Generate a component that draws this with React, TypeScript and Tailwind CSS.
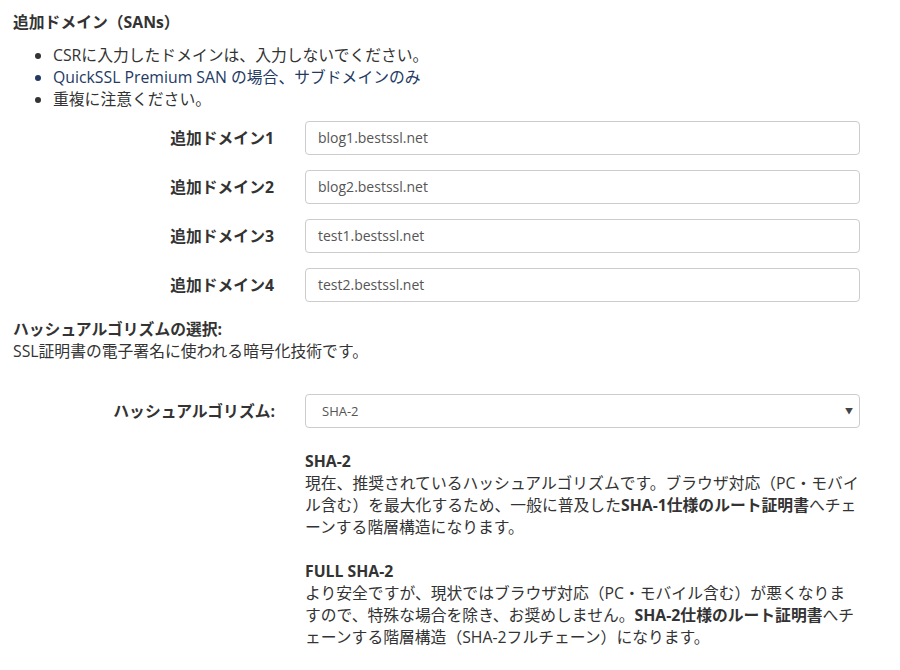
export default function App() {
  const doms = ["blog1.bestssl.net", "blog2.bestssl.net", "test1.bestssl.net", "test2.bestssl.net"];
  return (
    <div className="w-[900px] h-[670px] overflow-hidden bg-white text-[#333] text-[15.8px] leading-[22px]" style={{ fontFamily: '"Open Sans", "Noto Sans CJK JP", sans-serif' }}>
      <div className="pl-[13px] pt-[11px]">
        <div className="font-bold">追加ドメイン（SANs）</div>
        <ul className="list-disc pl-[40px] mt-[11px]">
          <li>CSRに入力したドメインは、入力しないでください。</li>
          <li className="text-[#243a63]">QuickSSL Premium SAN の場合、サブドメインのみ</li>
          <li>重複に注意ください。</li>
        </ul>
        <div className="mt-[11px] flex flex-col gap-[15px]">
          {doms.map((d, i) => (
            <div key={i} className="flex items-center">
              <div className="w-[261px] text-right font-bold">追加ドメイン{i + 1}</div>
              <div className="ml-[31px] w-[555px] h-[34px] border border-[#ccc] rounded-[4px] px-[12px] flex items-center text-[14px] text-[#555]">{d}</div>
            </div>
          ))}
        </div>
        <div className="mt-[16px] font-bold">ハッシュアルゴリズムの選択:</div>
        <div>SSL証明書の電子署名に使われる暗号化技術です。</div>
        <div className="mt-[32px] flex items-center">
          <div className="w-[262px] text-right font-bold">ハッシュアルゴリズム:</div>
          <div className="ml-[30px] w-[555px] h-[34px] border border-[#ccc] rounded-[4px] pl-[16px] pr-[6px] flex items-center justify-between text-[13px] text-[#555]">
            <span>SHA-2</span><span className="text-[8px] text-[#444]">▼</span>
          </div>
        </div>
        <div className="ml-[292px] w-[555px] mt-[22px]">
          <div className="font-bold">SHA-2</div>
          <div>現在、推奨されているハッシュアルゴリズムです。ブラウザ対応（PC・モバイル含む）を最大化するため、一般に普及した<b>SHA-1仕様のルート証明書</b>へチェーンする階層構造になります。</div>
          <div className="mt-[22px] font-bold">FULL SHA-2</div>
          <div>より安全ですが、現状ではブラウザ対応（PC・モバイル含む）が悪くなりますので、特殊な場合を除き、お奨めしません。<b>SHA-2仕様のルート証明書</b>へチェーンする階層構造（SHA-2フルチェーン）になります。</div>
        </div>
      </div>
    </div>
  );
}
